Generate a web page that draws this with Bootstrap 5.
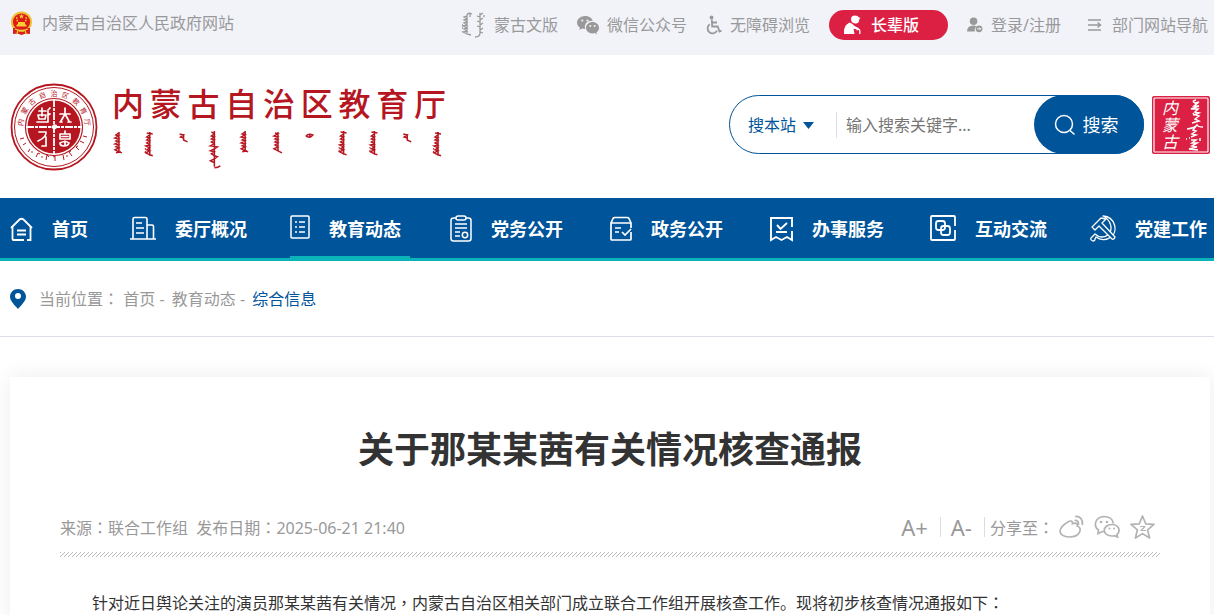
<!DOCTYPE html>
<html lang="zh-CN">
<head>
<meta charset="utf-8">
<meta name="viewport" content="width=device-width, initial-scale=1">
<title>关于那某某茜有关情况核查通报</title>
<link href="https://cdn.jsdelivr.net/npm/bootstrap@5.3.0/dist/css/bootstrap.min.css" rel="stylesheet">
<style>
  :root { --brand: #005499; --teal: #0ab4b9; --red: #db2043; --seal: #b5161f; }
  body { font-family: "Noto Sans", "Noto Sans CJK SC", sans-serif; font-size: 16px; line-height: 24px; color: #333; background: #fff; overflow-x: hidden; }
  a { color: inherit; text-decoration: none; }
  svg { flex: none; display: block; }
  .wrap { padding-left: 10px; padding-right: 4px; }
  .topbar { background: #f2f3f9; color: #999; height: 55px; padding-bottom: 5px; }
  .topbar a, .topbar nav { white-space: nowrap; }
  .topbar a { gap: 8px; }
  .tools { gap: 19px; padding-right: 2px; }
  .site-home { padding-bottom: 4px; }
  .elder { background: var(--red); color: #fff; height: 30px; padding: 0 29px 0 14px; }
  .masthead { height: 143px; padding-bottom: 4px; }
  .brand-name { width: 334px; margin-left: 14px; color: var(--seal); }
  .brand-name .chars { font-size: 32px; line-height: 44px; font-weight: 500; }
  .searchbox { width: 415px; height: 59px; border: 1px solid var(--brand); border-radius: 30px; }
  .searchbox select { width: 88px; border: 0; appearance: none; background: none; color: var(--brand); padding: 0; margin-left: 18px; }
  .searchbox .scope { border-right: 1px solid #dde; height: 26px; }
  .searchbox .caret { right: 22px; top: 10px; pointer-events: none; }
  .searchbox input { border: 0; outline: 0; width: 0; padding: 0 9px; background: none; }
  .searchbox input::placeholder { color: #757575; }
  .searchbox button { flex: none; width: 110px; margin: -1px; border: 0; border-radius: 30px; background: var(--brand); color: #fff; font-size: 18px; gap: 7px; padding: 0 6px 0 0; }
  .mainnav { background: var(--brand); border-bottom: 3px solid var(--teal); height: 63px; }
  .mainnav ul { display: grid; grid-template-columns: 3fr repeat(6, 4fr) 3fr; height: 60px; }
  .mainnav a { height: 60px; gap: 19px; color: #fff; font-size: 18px; font-weight: 700; white-space: nowrap; padding-top: 1px; }
  .mainnav .on { position: relative; }
  .mainnav .on::after { content: ""; position: absolute; left: 0; bottom: 0; width: 75%; height: 2px; background: var(--teal); }
  .crumbs { height: 76px; border-bottom: 1px solid #dcdde8; color: #999; gap: 13px; }
  .crumbs .now { color: var(--brand); }
  .crumbs nav a + a { margin-left: 3px; }
  .article { margin-top: 40px; padding: 48px 50px 0; background: #fff; box-shadow: 0 0 20px rgba(0,0,0,.08); }
  .article h1 { font-size: 36px; line-height: 50px; font-weight: 700; margin-bottom: 35px; }
  .meta { color: #999; height: 34px; }
  .meta button { border: 0; border-right: 1px solid #ddd; background: none; color: #999; font-size: 22px; line-height: 20px; padding: 0 12px 0 10px; height: 20px; }
  .share { gap: 5px; padding: 0 5px; }
  .share-links { gap: 10px; }
  .story { margin-top: 22px; text-indent: 2em; line-height: 36px; }
  .full { font-family: "Noto Sans CJK TC", sans-serif; }
</style>
</head>
<body class="d-flex flex-column min-vh-100">
<svg width="0" height="0" class="position-absolute" aria-hidden="true">
  <defs>
    <g id="w1"><path d="M6 0v20M6 1L3 3l3 1-4 2 4 1-3 2 3 1-4 2 4 1-3 2 3 1-4 2 4 2 3 1M3 21l5-1"/></g>
    <g id="w2"><path d="M6 0v24M3 1l6 1M6 3L3 5l3 1-3 2 3 1-3 2 3 2-4 1 4 2-3 2 3 1-4 2 4 2 3 1M1 17h1M1 20h1"/></g>
    <g id="w3"><path d="M2 1l4 1-3 2 3 1M6 1v6l4 2"/></g>
    <g id="w4"><path d="M6 0v36M3 1l3 2-3 2 3 1-3 2 3 1-3 2 3 2-4 2 7 1-3 2-4 2 4 1-3 2 3 2 3 1-3 2-4 2 4 2M6 37q4 0 6-2"/></g>
    <g id="w5"><path d="M6 0v19M3 1l3 1-4 2 4 1-3 2 3 1-3 2 3 1-3 2 3 2-4 2 4 2 4 2"/></g>
    <g id="w6"><path d="M1 3q4 3 7-1-4-2-7 1M5 2v2"/></g>
    <pattern id="slashes" width="4" height="5" patternUnits="userSpaceOnUse"><path d="M-4 5l5-5M0 5l5-5M4 5l5-5" stroke="#aaa" stroke-width=".8"/></pattern>
  </defs>
</svg>

<header>
  <div class="topbar wrap d-flex justify-content-between align-items-center">
    <a href="#" class="site-home d-flex align-items-center">
      <svg width="24" height="24" viewBox="0 0 24 24"><circle cx="11.500" cy="11" r="9.600" fill="#dd1b18" stroke="#edc133" stroke-width="2"/><path d="M3 17h17v6q-4-1-8.500 1-4-2-8.500-1z" fill="#d9201a"/><path d="M5 18q6 3 13 0M7 23l1-4M16 23l-1-4M9 20h5" fill="none" stroke="#f3cb35" stroke-width="1.300"/><path d="M11.500 3l.8 1.500h1.700l-1.300 1.200.5 1.700-1.700-1-1.700 1 .5-1.700L9 4.500h1.700zM6.500 14l1.500-1v-2h7v2l1.500 1v1.500h-10z" fill="#f7cf32"/><path d="M6 7h1.500M15.500 7H17M6.500 9.500H8M15 9.500h1.500" stroke="#f7cf32" stroke-width="1.300"/></svg>
      <span>内蒙古自治区人民政府网站</span>
    </a>
    <nav class="tools d-flex align-items-center">
      <a href="#" class="d-flex align-items-center">
        <svg width="25" height="27" viewBox="0 0 25 27" fill="none" stroke="#999" stroke-width="1.300"><path d="M11 2q-4-2-5 1v18M6 4L3 5l3 2-3 1 3 2-3 1 3 2-4 1 4 2-3 1 3 2-4 1 4 2 4 1M9 2v3M1 13h1M1 16h1M19 1v20q0 4-5 4M19 3l3-2M19 5l-3-1M19 8l3-2M19 10l-3-1M19 13l3-2M19 15l-3-1M19 18l3-2M19 20l3 1M23 3v2"/></svg>
        <span>蒙古文版</span>
      </a>
      <a href="#" class="d-flex align-items-center">
        <svg width="22" height="20" viewBox="0 0 22 20" fill="#999"><path d="M8 1C3.600 1 0 4 0 7.600c0 2.200 1.200 4 3 5.200L2.200 15l3-1.500q1.400.4 3 .4C6.800 9 10 5.500 15.800 5.700 14.800 3 11.700 1 8 1z"/><path d="M22 12.700c0-3.200-3-5.700-6.500-5.700S9 9.500 9 12.700s3 5.700 6.500 5.700q1.200 0 2.300-.3L20 19.500l-.6-2.200c1.600-1 2.600-2.700 2.600-4.600z"/><g fill="#f2f3f9"><circle cx="5.300" cy="5.500" r="1.100"/><circle cx="10.500" cy="5.500" r="1.100"/><circle cx="13.300" cy="11" r="1"/><circle cx="17.700" cy="11" r="1"/></g></svg>
        <span>微信公众号</span>
      </a>
      <a href="#" class="d-flex align-items-center">
        <svg width="16" height="20" viewBox="0 0 16 20" fill="none" stroke="#999" stroke-width="1.800"><circle cx="5.500" cy="2.500" r="1.900" fill="#999" stroke="none"/><path d="M5.800 4.500l.4 7h5.500l1.800 5 2-.8M6 7.500h5M3.800 9.200a5 5 0 1 0 7.200 6.500"/></svg>
        <span>无障碍浏览</span>
      </a>
      <a href="#" class="elder rounded-pill d-flex align-items-center fw-medium">
        <svg width="20" height="20" viewBox="0 0 20 20" fill="#fff"><path d="M8 4q0-3.500 4-3.500 3 0 4 2l1.500.3-1.200 1.400Q16 9 12 8.500 8 8 8 4z"/><path d="M6.500 7.500Q10 8.500 11.500 11l4.500 2.300-.5 1.500-5-1 1 5.200H1Q0 11 6.500 7.500z"/><path d="M13.500 15q3-1.500 3.300.5V19" fill="none" stroke="#fff" stroke-width="1.300"/></svg>
        <span>长辈版</span>
      </a>
      <a href="#" class="d-flex align-items-center">
        <svg width="16" height="16" viewBox="0 0 17 16"><circle cx="7" cy="4" r="4" fill="#999"/><path d="M0 15q0-6.500 7-6.500 2 0 3 .7Q7.500 11.500 8.500 15z" fill="#999"/><circle cx="12.800" cy="12" r="3.600" fill="#999"/><path d="M10.800 12h3.800m-1.500-1.500l1.500 1.500-1.500 1.500" stroke="#f2f3f9" fill="none"/></svg>
        <span>登录/注册</span>
      </a>
      <a href="#" class="d-flex align-items-center ms-2">
        <svg width="16" height="14" viewBox="0 0 16 14" fill="none" stroke="#999" stroke-width="1.500"><path d="M0 2h13M0 7h12M0 12h13M9.500 4.500L12.500 7l-3 2.500"/></svg>
        <span>部门网站导航</span>
      </a>
    </nav>
  </div>

  <div class="masthead wrap d-flex justify-content-between align-items-center">
    <a href="#" class="d-flex align-items-center pt-1" aria-label="内蒙古自治区教育厅">
      <svg width="88" height="88" viewBox="0 0 88 88" fill="none" stroke="#b5161f">
        <circle cx="44" cy="44" r="42.500" stroke-width="1.800"/><circle cx="44" cy="44" r="39.500" stroke-width="1"/><circle cx="44" cy="44" r="28.500" stroke-width="1.200"/><circle cx="44" cy="44" r="26.500" fill="#b5161f" stroke="none"/>
        <path d="M44 16v56M16 44h56" stroke="#fff" stroke-width="1.800" stroke-dasharray="8 1 3 1"/><path d="M44 41l3 1v3l-3 2-3-3z" fill="#fff" stroke="none"/>
        <g stroke="#fff" stroke-width="1.700" stroke-linecap="round" stroke-linejoin="round">
          <path d="M50 31h10M55 25v6l-4 7M55 31l4 7M50 39h2M58 39h3"/>
          <path d="M29 28h7M32 25v8M28 32h8l-1 4h-6zM27 39h10M38 27l2-2M38 32l2-1M38 28v11"/>
          <path d="M29 49h7q1 5-8 9M36 54v9h-4"/>
          <path d="M55 48v3M50 51h10v5H50zM52 53.500h6M50 60q5-3 9 0-1 3-5 3-4 0-4-3M55 58v4"/>
        </g>
        <g fill="#b5161f" stroke="none" font-size="7" text-anchor="middle" font-family="Noto Sans CJK SC, sans-serif">
          <text x="44" y="13" transform="rotate(-82 44 44)">内</text><text x="44" y="13" transform="rotate(-61 44 44)">蒙</text><text x="44" y="13" transform="rotate(-41 44 44)">古</text><text x="44" y="13" transform="rotate(-20 44 44)">自</text><text x="44" y="13">治</text><text x="44" y="13" transform="rotate(20 44 44)">区</text><text x="44" y="13" transform="rotate(41 44 44)">教</text><text x="44" y="13" transform="rotate(61 44 44)">育</text><text x="44" y="13" transform="rotate(82 44 44)">厅</text>
        </g>
        <path d="M10 56l4-1M13 62l3-2M18 69l2-3M26 74l2-4 2 1M36 77l1-5 2 2M45 78v-5l-2 1M54 77l-1-5M62 73l-3-4 2-1M69 67l-3-3 2-1M74 60l-4-2M77 54l-4-1" stroke-width="1"/>
        <g fill="#b5161f" stroke="none"><circle cx="22" cy="69" r=".8"/><circle cx="32" cy="74" r=".8"/><circle cx="57" cy="73" r=".8"/></g>
      </svg>
      <div class="brand-name">
        <div class="chars d-flex justify-content-between"><span>内</span><span>蒙</span><span>古</span><span>自</span><span>治</span><span>区</span><span>教</span><span>育</span><span>厅</span></div>
        <svg class="w-100" height="46" viewBox="0 0 336 46" preserveAspectRatio="xMinYMin" fill="none" stroke="#b5161f" stroke-width="1.500" aria-hidden="true">
          <use href="#w1" x="1" y="6"/><use href="#w2" x="32" y="6"/><use href="#w3" x="66" y="7"/><use href="#w4" x="97" y="5"/><use href="#w1" x="128" y="5"/><use href="#w5" x="161" y="6"/><use href="#w6" x="194" y="7"/><use href="#w2" x="227" y="5"/><use href="#w2" x="258" y="5"/><use href="#w3" x="291" y="7"/><use href="#w2" x="322" y="6"/>
        </svg>
      </div>
    </a>
    <div class="d-flex align-items-center gap-2">
      <form class="searchbox d-flex align-items-center" role="search">
        <div class="scope position-relative d-flex align-items-center">
          <select aria-label="搜索范围"><option>搜本站</option></select>
          <svg class="caret position-absolute" width="11" height="7" viewBox="0 0 11 7"><path d="M0 0h11L5.500 7z" fill="#005499"/></svg>
        </div>
        <input class="flex-grow-1" type="text" placeholder="输入搜索关键字..." aria-label="输入搜索关键字">
        <button type="button" class="d-flex align-items-center justify-content-center align-self-stretch">
          <svg width="22" height="22" viewBox="0 0 22 22" fill="none" stroke="#fff" stroke-width="1.500"><circle cx="10" cy="10" r="8.500"/><path d="M16 16.500l4.500 4"/></svg>搜索
        </button>
      </form>
      <svg width="58" height="58" viewBox="0 0 58 58" role="img" aria-label="内蒙古">
        <rect width="58" height="58" rx="2" fill="#db2043"/><rect x="2" y="2" width="54" height="54" rx="1" fill="none" stroke="#fff" stroke-width="1.200"/>
        <g fill="#fff" font-size="16" font-style="italic" font-family="Noto Sans CJK SC, sans-serif" text-anchor="middle"><text x="18" y="18">内</text><text x="18" y="35">蒙</text><text x="18" y="52">古</text></g>
        <path d="M44 4q-5 1-1 3l4-1-5 4 5 0-8 3 7 0-3 3 4 1-5 2-1-2M44 19l3 1-4 3 4 2-7 2M35 33q8-1 10-4 1 2 6 2M44 30l-3 4 3 1-4 3 4 1-5 2M34 43h1M37 42h1M39 44l5 0-4 3 5 0-5 3 5 1-8 2 9 1M48 42v3" fill="none" stroke="#fff" stroke-width="1.500"/>
      </svg>
    </div>
  </div>

  <nav class="mainnav wrap">
    <ul class="list-unstyled m-0">
      <li><a href="#" class="d-flex align-items-center">
        <svg width="23" height="26" viewBox="0 0 23 26" fill="none" stroke="#fff" stroke-width="1.800"><path d="M1 12l8.500-8.500q2-1.500 4 0L22 12M2.500 11v12q0 1 1 1H14M20.500 11v13H17M7 14.500h9M7 18.500h9"/></svg><span>首页</span></a></li>
      <li><a href="#" class="d-flex align-items-center">
        <svg width="26" height="28" viewBox="0 0 26 28" fill="none" stroke="#fff" stroke-width="1.600"><path d="M0 24h26M3 24V4q0-1.500 1.500-1.500h11Q17 2.500 17 4v20M17 10h5q1.500 0 1.500 1.500V24M6 8h6M6 13h8M6 18h8"/></svg><span>委厅概况</span></a></li>
      <li class="on"><a href="#" class="d-flex align-items-center" aria-current="page">
        <svg width="20" height="28" viewBox="0 0 20 28" fill="none" stroke="#fff" stroke-width="1.500"><rect x="1" y="1" width="18" height="22" rx="1"/><path d="M5 7h2M9 7h6M5 12h2M9 12h6M5 17h2M9 17h6"/></svg><span>教育动态</span></a></li>
      <li><a href="#" class="d-flex align-items-center">
        <svg width="22" height="28" viewBox="0 0 22 28" fill="none" stroke="#fff" stroke-width="1.500"><rect x="1" y="3" width="20" height="23" rx="2.500"/><rect x="6" y="1" width="10" height="4" rx="2" fill="#005499"/><path d="M5 9h12M5 13h12M5 17h5M5 21h5"/><circle cx="15" cy="20" r="2.700"/></svg><span>党务公开</span></a></li>
      <li><a href="#" class="d-flex align-items-center">
        <svg width="22" height="28" viewBox="0 0 22 28" fill="none" stroke="#fff" stroke-width="1.700"><path d="M21 17v7q0 1-1 1H2q-1 0-1-1V8h20v5M1 8l2-4.500Q3.500 2.500 5 2.500h12q1.500 0 2 1L21 8M5 13h6M5 17h4M12 17l3 3 6-6"/></svg><span>政务公开</span></a></li>
      <li><a href="#" class="d-flex align-items-center">
        <svg width="23" height="26" viewBox="0 0 23 26" fill="none" stroke="#fff" stroke-width="1.900"><path d="M22 11V2H1v22l5-3 5.500 3 5.500-3 5 3v-9M7 9l3.500 4L17 7M6 16h11"/></svg><span>办事服务</span></a></li>
      <li><a href="#" class="d-flex align-items-center">
        <svg width="26" height="28" viewBox="0 0 26 28" fill="none" stroke="#fff" stroke-width="1.800"><path d="M25 11V2q0-1-1-1H2Q1 1 1 2v22q0 1 1 1h22q1 0 1-1v-9"/><rect x="6" y="6" width="9" height="9" rx="2.500"/><rect x="11" y="11" width="9" height="9" rx="2.500"/></svg><span>互动交流</span></a></li>
      <li><a href="#" class="d-flex align-items-center">
        <svg width="26" height="28" viewBox="0 0 26 28" fill="none" stroke="#fff" stroke-width="1.300" stroke-linejoin="round"><path d="M13 1c13 1 15 16 8 21-5 4-11 3-15 0l-1 2q0 2-2 2-3-1-2-3l4-4c4 4 10 4 14 0C23 14 21 5 13 1z"/><path d="M2 12l9-9 5 1-4 4 13 14q-1 3-3 2L9 11l-4 4z" fill="#005499"/></svg><span>党建工作</span></a></li>
    </ul>
  </nav>
</header>

<div class="crumbs wrap d-flex align-items-center">
  <svg width="16" height="21" viewBox="0 0 16 21"><path d="M8 1C3.500 1 0 4.500 0 8.800 0 13 5 17.500 8 21c3-3.500 8-8 8-12.200C16 4.500 12.500 1 8 1z" fill="#005499"/><circle cx="8" cy="8" r="3" fill="#fff"/></svg>
  <nav aria-label="当前位置">当前位置<span class="full" lang="zh-TW">：</span> <a href="#">首页</a> - <a href="#">教育动态</a> - <a href="#" class="now">综合信息</a></nav>
</div>

<div class="wrap flex-grow-1 d-flex flex-column">
  <main class="article flex-grow-1">
    <h1 class="text-center">关于那某某茜有关情况核查通报</h1>
    <div class="meta d-flex justify-content-between align-items-center">
      <div>来源<span class="full" lang="zh-TW">：</span>联合工作组&nbsp; 发布日期<span class="full" lang="zh-TW">：</span>2025-06-21 21:40</div>
      <div class="d-flex align-items-center">
        <button type="button" aria-label="放大字号">A+</button>
        <button type="button" aria-label="缩小字号">A-</button>
        <div class="share d-flex align-items-center">
          <span>分享至<span class="full" lang="zh-TW">：</span></span>
          <div class="share-links d-flex">
            <a href="#" aria-label="微博"><svg width="25" height="24" viewBox="0 0 25 24" fill="none" stroke="#b3b3b3" stroke-width="1.700"><path d="M9 7c2-1.500 5-1.500 4.500 1.700 3-1 5.500-.7 4.700 2.300 6 2 2.800 11-7.700 11C4 22 1 19 1 16c0-3 4-7 8-9zM15.500 5.500q4.500-.5 4 4.500M16 1.500q8-.5 7.500 8.500"/></svg></a>
            <a href="#" aria-label="微信"><svg width="26" height="24" viewBox="0 0 26 24" fill="none" stroke="#b3b3b3" stroke-width="1.700"><path d="M10 16.500H8.500L4 18.500l.5-3.300C-1 11 1 2 10 1.500c5.500 0 8.700 3 9.500 7"/><path d="M18 9.500c-10 0-10.500 11 0 11.500q1.500 0 2.500-.3l3 1.300-.5-2.500C27.500 15.500 24 9.500 18 9.500z"/><g fill="#b3b3b3" stroke="none"><circle cx="7" cy="7" r="1.300"/><circle cx="13" cy="7" r="1.300"/><circle cx="15.500" cy="13.500" r="1"/><circle cx="20" cy="13.500" r="1"/></g></svg></a>
            <a href="#" aria-label="QQ空间"><svg width="25" height="24" viewBox="0 0 25 24" fill="none" stroke="#b3b3b3" stroke-width="1.700" stroke-linejoin="round"><path d="M12.500 1l3.200 7.800 8.300.6-6.400 5.400 2 8.200-7.100-4.400L5.400 23l2-8.200L1 9.400l8.300-.6z"/><path d="M10 11.500h5l-4 4h5" stroke-width="1.200"/></svg></a>
          </div>
        </div>
      </div>
    </div>
    <svg class="w-100 mt-2" height="10" aria-hidden="true"><rect width="100%" height="5" y="0" fill="url(#slashes)"/></svg>
    <p class="story mb-0">针对近日舆论关注的演员那某某茜有关情况<span class="full" lang="zh-TW">，</span>内蒙古自治区相关部门成立联合工作组开展核查工作。现将初步核查情况通报如下<span class="full" lang="zh-TW">：</span></p>
  </main>
</div>
<script src="https://cdn.jsdelivr.net/npm/bootstrap@5.3.0/dist/js/bootstrap.bundle.min.js"></script>
</body>
</html>
